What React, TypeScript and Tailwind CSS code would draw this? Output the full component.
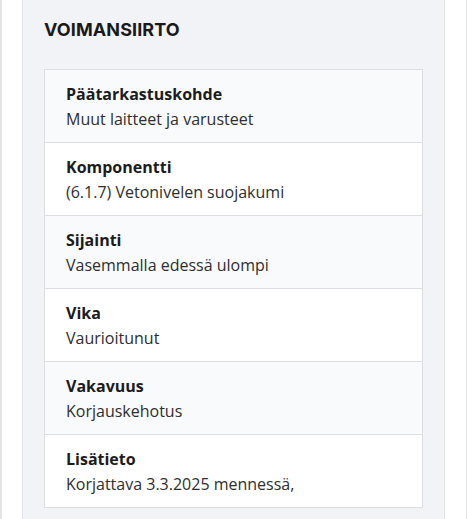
const rows = [
  { label: 'Päätarkastuskohde', value: 'Muut laitteet ja varusteet' },
  { label: 'Komponentti', value: '(6.1.7) Vetonivelen suojakumi' },
  { label: 'Sijainti', value: 'Vasemmalla edessä ulompi' },
  { label: 'Vika', value: 'Vaurioitunut' },
  { label: 'Vakavuus', value: 'Korjauskehotus' },
  { label: 'Lisätieto', value: 'Korjattava 3.3.2025 mennessä,' },
];

export default function App() {
  return (
    <div className="min-h-[519px] h-[519px] overflow-hidden bg-white border-l-2 border-r border-[#e3e4e8] pl-5 pr-[21px]">
      <div className="h-full bg-[#f2f3f7] border-x border-[#e0e2e7] px-[21px] pt-4">
        <h2 className="font-['Inter',sans-serif] text-[18px] leading-7 font-bold text-[#1a1a1a] tracking-[0.1px]">
          VOIMANSIIRTO
        </h2>
        <div className="mt-[25px] border border-[#dcdee3] font-['Open_Sans',sans-serif]">
          {rows.map((r, i) => (
            <div
              key={r.label}
              className={`px-[21px] pt-3 pb-[11px] ${i > 0 ? 'border-t border-[#dcdee3]' : ''} ${
                i % 2 === 0 ? 'bg-[#f9fafc]' : 'bg-white'
              }`}
            >
              <div className="text-[16px] leading-[25px] font-bold text-[#1c1c1c]">{r.label}</div>
              <div className="text-[16px] leading-[24px] text-[#2e2e2e]">{r.value}</div>
            </div>
          ))}
        </div>
      </div>
    </div>
  );
}
